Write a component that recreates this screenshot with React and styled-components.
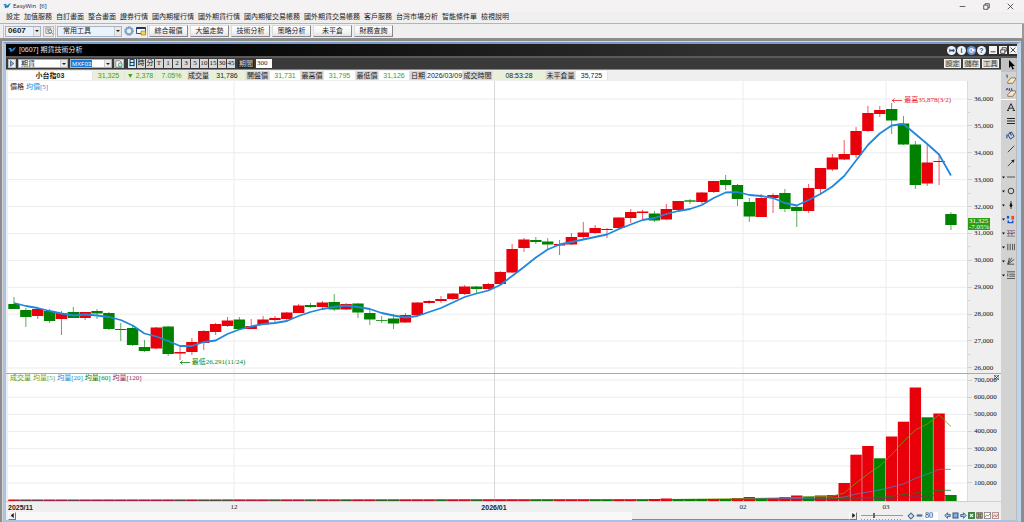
import React from 'react'
import styled, { createGlobalStyle, css } from 'styled-components'

// data
const menus = [
  '設定', '加值服務', '自訂畫面', '整合畫面', '證券行情', '國內期權行情', '國外期貨行情',
  '國內期權交易帳務', '國外期貨交易帳務', '客戶服務', '台灣市場分析', '智能條件單', '檢視說明',
]
const shortcuts = ['綜合報價', '大盤走勢', '技術分析', '策略分析', '未平倉', '財務查詢']
const periods = ['日', '時', '分', 'T', '1', '2', '3', '5', '10', '15', '30', '45']

const quote = [
  { text: '小台指03', w: 85, name: true },
  { text: '31,325', w: 32, tint: true, down: true },
  { text: '▼ 2,378', w: 31, tint: true, down: true },
  { text: '7.05%', w: 32, tint: true, down: true },
  { text: '成交量', w: 21, label: true },
  { text: '31,786', w: 37, tint: true },
  { text: '開盤價', w: 24, label: true },
  { text: '31,731', w: 31, down: true },
  { text: '最高價', w: 23, label: true },
  { text: '31,795', w: 32, down: true },
  { text: '最低價', w: 23, label: true },
  { text: '31,126', w: 31, down: true },
  { text: '日期', w: 17, label: true },
  { text: '2026/03/09', w: 36 },
  { text: '成交時間', w: 30, label: true },
  { text: '08:53:28', w: 53, tint: true },
  { text: '未平倉量', w: 30, label: true },
  { text: '35,725', w: 32 },
]

// [high, body top, body bottom, low, up?] in plot units
const candles = [
  [297, 304, 309, 309, 0], [308, 310, 317, 327, 0], [308, 309, 316, 319, 1], [309, 311, 321, 323, 0],
  [311, 313, 319, 335, 1], [307, 312, 318, 318, 0], [312, 312, 318, 320, 1], [309, 311, 313.5, 319, 0],
  [312, 313, 329, 330, 0], [323, 329, 330, 341, 0], [326, 328, 345, 346, 0], [340, 347, 351, 352, 0],
  [327, 327.5, 348.5, 349, 1], [326, 326.5, 354, 356, 0], [346, 352, 353.5, 360, 1], [338, 342, 352, 355, 1],
  [330, 331, 343, 350, 1], [323, 324, 332, 335, 1], [317, 320.5, 326, 327, 1], [317, 319.5, 329, 330, 0],
  [319, 326, 329, 329, 1], [316, 319.5, 324.5, 325, 1], [316, 318, 320, 322, 1], [312, 312.5, 319, 320, 1],
  [304, 305.5, 313, 313, 1], [303, 305, 307, 308, 0], [301, 302.5, 307, 309, 1], [294, 302, 309.5, 311, 0],
  [303, 304, 309.5, 310, 1], [303, 303.5, 312.5, 318, 0], [310, 313, 319.5, 325, 0], [316, 320, 320.8, 323, 0],
  [314, 318.5, 323.5, 329, 0], [313, 315, 322.5, 323, 1], [302, 302.5, 315, 316, 1], [300, 301, 303, 304, 1],
  [296, 299, 301, 303, 1], [293, 293.5, 299, 300, 1], [285, 286.5, 294, 295, 1], [286, 286.5, 289, 293, 0],
  [283, 284, 289, 291, 1], [271, 272, 284, 285, 1], [244, 249, 272.5, 273, 1], [238, 239.5, 248, 252, 1],
  [237, 240, 242, 244, 0], [238, 241.5, 244.5, 249, 0], [240, 244, 245.5, 255, 1], [233, 237, 244.5, 245, 1],
  [222, 232.5, 237, 239, 1], [225, 228, 233, 234, 1], [228, 229, 230, 238, 1], [217, 217.5, 228, 229, 1],
  [209, 212, 218, 223, 1], [210, 211.5, 213, 220, 1], [211, 213.5, 220.5, 222, 0], [204, 209, 219.5, 220, 1],
  [201, 201, 210, 211, 1], [199, 200.3, 201.7, 204, 0], [192, 192.5, 202, 204, 1], [181, 181, 192, 193, 1],
  [175, 180, 185, 190, 0], [184, 185, 199, 206, 0], [198, 202, 216.5, 222, 0], [194, 198, 217, 217, 1],
  [193, 195, 198, 213, 1], [189, 193, 209, 212, 0], [205, 207, 211, 227, 0], [184, 188, 211, 213, 1],
  [168, 168, 189, 194, 1], [154, 157.5, 169.5, 171, 1], [140, 154, 159.5, 160, 1], [127, 131, 155, 158, 1],
  [106, 113, 131, 132, 1], [106, 110, 114, 117, 1], [103, 109, 120.5, 134, 0], [116, 123.5, 144.5, 145, 0],
  [141, 144.5, 185, 189, 0], [145, 162.5, 183.5, 186, 1], [155, 161, 162, 185, 1], [212, 214, 225, 230, 0],
]

const average = [
  303, 306, 308, 311, 313.5, 315.5, 314.5, 315.5, 317, 320, 325.5, 333.5, 336.5, 341, 346, 346, 342, 340.5, 334, 329.5,
  326.5, 324, 323, 321, 316, 312, 309, 307, 305.5, 307, 309, 313, 315.5, 317.5, 316, 312, 308, 302.5, 297, 293.5,
  290.5, 285, 276, 267, 257.5, 249.5, 244.5, 242, 239.5, 237, 234.5, 229, 224.5, 220, 218, 214, 211, 209, 205, 198,
  192.5, 192, 195, 196, 198, 203, 205.5, 200, 194, 186.5, 176, 160.5, 145, 133.5, 125.5, 124, 134, 144, 154.5, 175.5,
]

// top of each volume bar, first ones are all one flat line
const volumeTops = {
  54: 499, 55: 498.5, 56: 499, 57: 499, 58: 499, 59: 499, 60: 499, 61: 498, 62: 497, 63: 498, 64: 498, 65: 497,
  66: 495.5, 67: 496.5, 68: 495.5, 69: 495, 70: 483, 71: 454.7, 72: 446, 73: 458.3, 74: 436.5, 75: 421.7,
  76: 387.5, 77: 417.3, 78: 413.5, 79: 495,
}
const volumeDown = [1, 2, 5, 14, 16, 17, 18, 22, 25, 28, 31, 32, 36, 39, 44, 45, 49, 50, 53, 56, 57, 58, 60, 63, 67, 73, 77, 79]

const volumeLines = [
  { color: '#7a9a10', pts: [[55, 499.5], [62, 498.5], [66, 497.5], [69, 496], [70, 493], [71, 483], [72, 474], [73, 466], [74, 454.5], [75, 441.5], [76, 430], [77, 424], [78, 415], [79, 426.5]] },
  { color: '#4a7fc8', pts: [[60, 499.5], [69, 498], [70, 497], [71, 494], [72, 492], [73, 490], [74, 487], [75, 484], [76, 478.5], [77, 474], [78, 469.3], [79, 469.3]] },
  { color: '#188018', pts: [[66, 499.5], [68, 499], [71, 498], [74, 496.3], [76, 493], [77, 491.5], [78, 490.3], [79, 490.3]] },
  { color: '#8c2a5c', pts: [[0, 500.6], [70, 499.3], [74, 498.3], [76, 496.5], [78, 495.4], [79, 495.4]] },
]

const prices = [36, 35, 34, 33, 32, 31, 30, 29, 28, 27, 26].map(n => `${n},000`)
const volumes = [7, 6, 5, 4, 3, 2, 1].map(n => `${n}00,000`)
const months = [234, 743, 886]
const cx = i => 14 + i * 11.86

const sans = "'Liberation Sans', 'Noto Sans CJK TC', sans-serif"
const serif = "'Liberation Serif', 'Noto Sans CJK TC', serif"

// styles
const GlobalStyle = createGlobalStyle`
  * { box-sizing: border-box; }
  body { margin: 0; background: #efefef; overflow: hidden; }
  button, input, select { font: inherit; color: inherit; margin: 0; padding: 0; border-radius: 0; }
  svg { display: block; }
`
const App = styled.div`
  display: flex;
  flex-direction: column;
  height: 100vh;
  font: 7px/8px ${sans};
  color: #222;
`
const TitleBar = styled.header`
  display: flex;
  align-items: center;
  height: 12px;
  padding: 0 10px 0 3px;
  gap: 2px;
  background: #f5f2f4;
  font: 6px/10px 'Open Sans', sans-serif;
  white-space: pre;
`
const Spacer = styled.div`
  flex: 1;
`
const CaptionButton = styled.button`
  width: 22px;
  height: 10px;
  display: grid;
  place-items: center end;
  border: 0;
  background: none;
  color: #222;
`
const MenuBar = styled.nav`
  display: flex;
  align-items: center;
  gap: 4px;
  height: 12px;
  padding: 0 6px 1px;
  border-bottom: 1px solid #b4b4b4;
  background: #efefef;
`
const MenuLink = styled.a`
  color: #222;
  text-decoration: none;
  white-space: nowrap;
`
const ToolBar = styled.div`
  display: flex;
  align-items: center;
  height: 15px;
  padding-left: 3px;
  border-right: 2px solid #999;
  border-bottom: 1px solid #909090;
`
const ToolGroup = styled.div`
  display: flex;
  align-items: center;
  gap: 2px;
  height: 13px;
  padding: 0 1px;
  border-left: 1px solid #c4c4c4;
`
const Select = styled.select`
  appearance: none;
  width: ${p => p.$w}px;
  height: ${p => (p.$small ? 9 : 11)}px;
  padding-left: ${p => p.$pad || 2}px;
  border: 1px solid #a8b4c4;
  background: ${p => (p.$small ? '#fff' : '#eaf3fc')};
  font-weight: ${p => (p.$bold ? 700 : 400)};
  font-size: ${p => (p.$bold ? 8 : 7)}px;
  line-height: 8px;
  grid-area: 1 / 1;
`
const Combo = styled.div`
  display: grid;
  align-items: center;
`
const Arrow = styled.span`
  grid-area: 1 / 1;
  justify-self: end;
  width: 7px;
  height: ${p => (p.$small ? 7 : 9)}px;
  margin-right: 1px;
  display: grid;
  place-items: center;
  background: #e8e8e8;
  border-left: 1px solid #ccc;
  pointer-events: none;
  &::after {
    content: '';
    border: 2px solid transparent;
    border-top-color: #222;
    border-bottom: 0;
  }
`
const IconButton = styled.button`
  width: ${p => p.$w || 11}px;
  height: ${p => p.$h || 11}px;
  display: grid;
  place-items: center;
  border: ${p => (p.$flat ? 0 : '1px solid #bbb')};
  background: ${p => (p.$flat ? 'none' : '#eee')};
`
const Shortcut = styled.button`
  width: 39px;
  height: 12px;
  border: 1px solid #dcdcdc;
  border-right-color: #888;
  border-bottom-color: #888;
  background: linear-gradient(#fff, #f4f4f6 60%, #e0e2ea);
  line-height: 8px;
`
const Desktop = styled.main`
  flex: 1;
  min-height: 0;
  display: flex;
  border: solid #8c8c8c;
  border-width: 2px 3px 0 2px;
  background: #d4d4d4;
  padding: 1px 0 0 1px;
`
const Frame = styled.section`
  flex: 1;
  min-width: 0;
  display: flex;
  flex-direction: column;
  border: solid #a9c4e2;
  border-width: 2px 4px 2px 3px;
  border-top-color: #7d9cc4;
  border-right-color: #bdd6ee;
`
const FrameTitle = styled.div`
  display: flex;
  align-items: center;
  height: 14px;
  padding: 0 1px 0 2px;
  gap: 3px;
  background: linear-gradient(90deg, #000 15%, #303030 70%);
  border-bottom: 2px solid #5a5a5a;
  color: #e4e4e4;
`
const Round = styled.button`
  width: 9px;
  height: 9px;
  padding: 0;
  margin-left: -2px;
  border: 0;
  border-radius: 50%;
  background: ${p => (p.$blue ? '#6c98dc' : '#eef4fc')};
  color: ${p => (p.$blue ? '#fff' : '#334a70')};
  font: 700 7px/9px ${sans};
`
const WinButton = styled.button`
  width: 8px;
  height: 8px;
  margin-right: -1px;
  display: grid;
  place-items: center;
  border: 0;
  background: #f4f4f4;
  color: #333;
`
const FrameBody = styled.div`
  flex: 1;
  min-height: 0;
  display: flex;
`
const Panel = styled.div`
  flex: 1;
  min-width: 0;
  display: flex;
  flex-direction: column;
  background: #efefef;
`
const Controls = styled.div`
  display: flex;
  align-items: center;
  height: 12px;
  padding: 0 2px;
  gap: 2px;
  background: #3a3a3a;
  border-bottom: 1px solid #888;
`
const SymbolInput = styled.input`
  width: 42px;
  height: 9px;
  padding-left: 1px;
  border: 1px solid #a8b4c4;
  background: linear-gradient(90deg, #1a7ad8 21px, #fff 21px);
  color: #fff;
  font-size: 6px;
  grid-area: 1 / 1;
`
const Periods = styled.div`
  display: flex;
  gap: 1px;
  margin: 0 1px 0 2px;
`
const Period = styled.button`
  width: 8px;
  height: 9px;
  border: 0;
  background: ${p => (p.$on ? '#d4eef0' : '#d8d8d8')};
  font: ${p => (p.$on ? 700 : 400)} 7px/9px ${serif};
  color: #111;
`
const PeriodLabel = styled.label`
  padding: 0 1px;
  background: #222;
  color: #ddd;
`
const PeriodInput = styled.input`
  width: 16px;
  height: 9px;
  padding-left: 1px;
  border: 0;
  background: #fff;
  font: 7px/9px ${serif};
`
const SmallButton = styled.button`
  width: 17px;
  height: 9px;
  border: 1px solid #f0f0f0;
  background: #d0d0c8;
  color: #444;
  line-height: 7px;
`
const Quote = styled.div`
  display: flex;
  align-items: center;
  height: 11px;
  padding-left: 2px;
`
const Cell = styled.div`
  flex: none;
  width: ${p => p.$w}px;
  height: 9px;
  border-right: 1px solid #e4e4e4;
  background: #fff;
  text-align: center;
  line-height: 9px;
  white-space: nowrap;
  ${p => p.$label && css`background: #d8d8d8;`}
  ${p => p.$tint && css`background: #e8f1d8;`}
  ${p => p.$down && css`color: #3aa01c;`}
  ${p => p.$name && css`font-weight: 700;`}
`
const ChartRow = styled.div`
  flex: ${p => p.$grow} 1 0;
  min-height: 0;
  display: flex;
  padding-left: 2px;
  border-top: ${p => (p.$divided ? '1px solid #aaa' : 0)};
`
const Plot = styled.div`
  position: relative;
  flex: 1;
  min-width: 0;
  background: #fff;
  svg { width: 100%; height: 100%; }
`
const Legend = styled.div`
  position: absolute;
  top: ${p => p.$top}px;
  left: 2px;
  display: flex;
  gap: 2px;
  font-family: ${serif};
  white-space: nowrap;
`
const Tone = styled.span`
  color: ${p => p.$c};
`
const Note = styled.div`
  position: absolute;
  left: ${p => p.$x}%;
  top: ${p => p.$y}%;
  display: flex;
  align-items: center;
  gap: 2px;
  color: ${p => p.$c};
  font-family: ${serif};
  white-space: nowrap;
  svg { width: 10px; height: 5px; }
`
const Axis = styled.div`
  position: relative;
  width: 34px;
  display: flex;
  flex-direction: column;
  justify-content: space-between;
  padding: ${p => p.$pad};
  border-left: 1px solid #dcdcdc;
  color: #111;
  font-family: ${serif};
`
const Tick = styled.div`
  display: flex;
  align-items: center;
  gap: 2px;
  height: 8px;
  &::before {
    content: '';
    width: ${p => (p.$minor ? 2 : 4)}px;
    height: 1px;
    background: #d0d0d0;
  }
`
const LastPrice = styled.div`
  position: absolute;
  left: 0;
  top: 47%;
  padding: 0 1px;
  background: #2c9c10;
  color: #fff;
  line-height: 6px;
`
const ClosePane = styled.button`
  position: absolute;
  right: 2px;
  top: 1px;
  width: 5px;
  height: 5px;
  border: 0;
  background: none;
`
const TimeAxis = styled.div`
  display: grid;
  grid-template-columns: 96fr 260fr 260fr 238fr 48fr 57fr;
  height: 10px;
  padding: 1px 34px 0 2px;
  border-top: 1px solid #d0d0d0;
  font: 7px/9px ${serif};
  text-align: center;
`
const Month = styled.span`
  text-align: ${p => (p.$first ? 'left' : 'center')};
  ${p => p.$year && css`font: 700 7px/9px ${sans};`}
`
const ScrollRow = styled.div`
  display: flex;
  align-items: center;
  height: 9px;
  padding-left: 2px;
`
const ScrollButton = styled.button`
  width: 8px;
  height: 8px;
  display: grid;
  place-items: center;
  border: 1px solid #fff;
  border-right-color: #777;
  border-bottom-color: #777;
  background: #eee;
`
const Track = styled.div`
  flex: 1;
  height: 8px;
  display: flex;
  justify-content: flex-end;
  background: #f8f8f8;
`
const Thumb = styled.div`
  width: 26%;
  border-bottom: 1px solid #888;
  background: #efefef;
`
const Range = styled.input`
  appearance: none;
  width: 42px;
  height: 8px;
  margin: 0 3px 0 4px;
  background:
    linear-gradient(#999, #999) 0 3px / 100% 1px no-repeat,
    repeating-linear-gradient(90deg, #999 0 1px, transparent 1px 3px) 0 7px / 100% 1px no-repeat;
  &::-webkit-slider-thumb {
    appearance: none;
    width: 2px;
    height: 5px;
    background: #666;
  }
`
const CountInput = styled.input`
  width: 14px;
  height: 8px;
  padding-left: 1px;
  border: 0;
  background: #fff;
  font: 8px/8px ${serif};
`
const Tools = styled.div`
  display: flex;
  margin: 0 2px 0 5px;
`
const SideBar = styled.aside`
  width: 16px;
  display: flex;
  flex-direction: column;
  background: #d2d2d2;
  border-right: 1px solid #bbb;
`
const SideButton = styled.button`
  height: 14px;
  display: grid;
  grid-template-columns: 4px 11px;
  place-items: center;
  border: 0;
  background: ${p => (p.$on ? '#c2c2c2' : 'none')};
  border-bottom: ${p => (p.$rule ? '1px solid #fff' : 0)};
`

// icons
const Ico = ({ s = 8, children, ...rest }) => (
  <svg width={s} height={s} viewBox="0 0 10 10" fill="none" stroke="currentColor" {...rest}>{children}</svg>
)
const Logo = () => (
  <svg width="8" height="6" viewBox="0 0 18 12">
    <path d="M0 2 L7 1 L9 6 L13 1 L18 0 L12 8 L9 9 L6 11 L4 5 Z" fill="#2a8fd0" />
    <path d="M2 5 L6 11 L8 8 Z M11 3 L13 8 L9 10 Z" fill="#145f9c" />
  </svg>
)
const PageSearch = () => (
  <Ico><path d="M1 1h6v7H1z M2.500 3h3 M2.500 5h2" stroke="#888" /><circle cx="6.500" cy="5.500" r="2" stroke="#555" fill="#dff" /><path d="M8 7l2 2" stroke="#555" /></Ico>
)
const PageAdd = () => (
  <Ico><path d="M1 1h5l2 2v6H1z" fill="#fff" stroke="#666" /><circle cx="6.500" cy="6" r="2.500" fill="#c8e8d8" stroke="#397" /></Ico>
)
const Eraser = ({ tag }) => (
  <Ico s={11}>
    <path d="M2.500 7l3-3.500H9.500v1.500L7 8.500H2.500z" fill="#f6e6c4" stroke="#84704a" strokeWidth=".8" />
    <path d={tag ? 'M1 3L2 1L3 3M4 1v2h1M6 1v2h1' : 'M1 1h1v2.500'} stroke="#3344bb" strokeWidth=".9" />
  </Ico>
)
const sideTools = [
  { name: '選取', on: true, art: <Ico s={10}><path d="M3 0v8l2-2 1.500 3.500L8 9 6.500 6H9z" fill="#000" stroke="none" /></Ico> },
  { name: '清除', art: <Eraser /> },
  { name: '全部清除', rule: true, art: <Eraser tag /> },
  { name: '文字', art: <Ico><path d="M.8 9.500L5 .8l4.200 8.700M2.500 6.500h5M0 9.500h2.500M7 9.500h3" stroke="#222" strokeWidth="1.200" /></Ico> },
  { name: '線寬', art: <Ico><path d="M0 2h10M0 5h10M0 8h10" stroke="#222" strokeWidth="1.300" /></Ico> },
  { name: '填色', art: <Ico s={9}><path d="M2 4l4-3 3 5-4 3z" fill="#b8d4f4" stroke="#334" /><path d="M1 4v4M4 1l2 4" stroke="#25a" strokeWidth="1.300" /></Ico> },
  { name: '直線', art: <Ico><path d="M1 9l8-8" stroke="#222" /></Ico> },
  { name: '箭頭', art: <Ico><path d="M1 9l8-8" stroke="#222" /><path d="M9.500 .5L5 2l3 3z" fill="#222" stroke="none" /></Ico> },
  { name: '水平線', more: true, art: <Ico><path d="M0 5h10" stroke="#333" /></Ico> },
  { name: '圓形', more: true, art: <Ico><circle cx="5" cy="5" r="3.500" stroke="#333" strokeWidth="1.200" /></Ico> },
  { name: '標記', more: true, art: <Ico><path d="M5 0v10" stroke="#222" /><path d="M5 2l2 3.500-2 2.500-2-2.500z" fill="#111" stroke="none" /></Ico> },
  { name: '漲跌', more: true, art: <Ico s={9}><path d="M1 1h2.500v3H1z" fill="#1558c8" stroke="none" /><path d="M6 1h3v4H6z" fill="#e84a1c" stroke="none" /><path d="M2.500 6v2.500h5V6" stroke="#1558c8" strokeWidth="1.600" /></Ico> },
  { name: '通道', more: true, art: <Ico><path d="M0 2h10M0 9h10M2 2v7M6 2v7" stroke="#777" /><path d="M0 6l3-1 3 1 4-1.500" stroke="#c030b0" strokeWidth="1.300" /></Ico> },
  { name: '週期線', more: true, art: <Ico><path d="M1 1v8M4 1v8M7 1v8M9.500 1v8" stroke="#333" /></Ico> },
  { name: '扇形線', more: true, art: <Ico><path d="M1 9L3 1M1 9l5-8M1 9l8-6M1 9h8" stroke="#333" /></Ico> },
  { name: '黃金分割', more: true, art: <Ico><path d="M0 1h10M3 4h7M3 6.500h7M0 9.500h10M1 3v4" stroke="#333" /></Ico> },
]
const bottomTools = [
  ['左移', <path d="M1 5l4-4v2.500h4v3H5V9z" fill="#9cc0e8" stroke="#246" />],
  ['停止', <path d="M1.500 1.500h7v7h-7z" fill="#7fb0ec" stroke="#357" strokeWidth="1.500" />],
  ['右移', <path d="M9 5L5 1v2.500H1v3h4V9z" fill="#9cc0e8" stroke="#246" />],
  ['試算表', <><path d="M.5 .5h9v9h-9z" fill="#2f9a3a" stroke="#165c1c" /><path d="M3 3l4 4M7 3L3 7" stroke="#fff" strokeWidth="1.500" /></>],
  ['儲存', <><path d="M.5 1h9v8h-9z" fill="#c8b870" stroke="#555" /><path d="M3 1v3h4V1M3 9V6h4v3" stroke="#333" /></>],
  ['線圖', <><path d="M.5 .5h9v9h-9z" fill="#fff" stroke="#555" /><path d="M1 8l3-4 2 2 3-4" stroke="#c33" /></>],
  ['量圖', <><path d="M.5 .5h9v9h-9z" fill="#f4e4e0" stroke="#866" /><path d="M1 7l3-3 2 3 3-4" stroke="#c33" /></>],
]

const path = pts => pts.map(([i, y]) => `${cx(i)},${y}`).join(' ')

const Grid = ({ levels, top, bottom }) => (
  <g stroke="#ececec">
    {levels.map(y => <path key={y} d={`M8 ${y}H967`} />)}
    {months.map(x => <path key={x} d={`M${x} ${top}V${bottom}`} />)}
    <path d={`M494.500 ${top}V${bottom}`} stroke="#d8d8d8" />
  </g>
)

const PriceChart = () => (
  <svg viewBox="8 81 959 292" preserveAspectRatio="none">
    <Grid levels={prices.map((_, i) => 99 + i * 26.9)} top={81} bottom={373} />
    {candles.map(([hi, top, bottom, lo, up], i) => (
      <g key={i} fill={up ? '#e8000b' : '#008200'}>
        <rect x={cx(i) - 0.5} y={hi} width="1" height={lo - hi} opacity=".65" />
        <rect x={cx(i) - 5.7} y={top} width="11.400" height={bottom - top} />
      </g>
    ))}
    <polyline points={path(average.map((y, i) => [i, y]))} fill="none" stroke="#2088dc" strokeWidth="1.800" strokeLinejoin="round" />
  </svg>
)

const VolumeChart = () => (
  <svg viewBox="8 374 959 127" preserveAspectRatio="none">
    <Grid levels={volumes.map((_, i) => 380 + i * 17.17)} top={374} bottom={501} />
    {candles.map((_, i) => {
      const y = volumeTops[i] || 499.5
      return <rect key={i} x={cx(i) - 5.7} y={y} width="11.400" height={501 - y} fill={volumeDown.includes(i) ? '#008200' : '#e8000b'} />
    })}
    {volumeLines.map(l => (
      <polyline key={l.color} points={path(l.pts)} fill="none" stroke={l.color} strokeWidth=".8" />
    ))}
  </svg>
)

const ArrowLeft = () => (
  <svg viewBox="0 0 10 5" fill="none" stroke="currentColor"><path d="M10 2.500H0M2.500 .5L.5 2.500l2 2" strokeWidth=".8" /></svg>
)

const EasyWin = () => (
  <App>
    <GlobalStyle />
    <TitleBar>
      <Logo />
      <span>EasyWin  [6]</span>
      <Spacer />
      <CaptionButton aria-label="最小化"><Ico s={7}><path d="M1 5h8" /></Ico></CaptionButton>
      <CaptionButton aria-label="還原"><Ico s={7}><path d="M1 3h6v6H1zM3 3V1h6v6H7" /></Ico></CaptionButton>
      <CaptionButton aria-label="關閉"><Ico s={7}><path d="M1 1l8 8M9 1L1 9" /></Ico></CaptionButton>
    </TitleBar>
    <MenuBar>
      {menus.map(m => <MenuLink key={m} href="#">{m}</MenuLink>)}
    </MenuBar>
    <ToolBar>
      <ToolGroup>
        <Combo>
          <Select aria-label="代號" $w={36} $bold defaultValue="0607"><option>0607</option></Select>
          <Arrow />
        </Combo>
        <IconButton aria-label="查詢"><PageSearch /></IconButton>
      </ToolGroup>
      <ToolGroup>
        <Combo>
          <Select aria-label="工具" $w={65} $pad={5} defaultValue="常用工具"><option>常用工具</option></Select>
          <Arrow />
        </Combo>
        <IconButton aria-label="選項" $flat $w={10}>
          <Ico s={10}><circle cx="5" cy="5" r="3.200" stroke="#7fa8d8" strokeWidth="2" /><circle cx="5" cy="5" r="4.400" stroke="#6a90b8" strokeDasharray="1.200 1.200" /></Ico>
        </IconButton>
        <IconButton aria-label="視窗" $flat $w={10}>
          <Ico s={10}><path d="M.5 1.500h9v6h-9z" fill="#fff" stroke="#357" /><path d="M.5 2h9" stroke="#236" strokeWidth="2" /><path d="M5 5h4.500v4H5z" fill="#f4d460" stroke="#a80" strokeWidth=".7" /></Ico>
        </IconButton>
      </ToolGroup>
      <ToolGroup>
        {shortcuts.map(s => <Shortcut key={s}>{s}</Shortcut>)}
      </ToolGroup>
    </ToolBar>

    <Desktop>
      <Frame>
        <FrameTitle>
          <Logo />
          <span>[0607] 期貨技術分析</span>
          <Spacer />
          <Round aria-label="離開">↦</Round>
          <Round>i</Round>
          <Round $blue aria-label="同步">⟳</Round>
          <Round>?</Round>
          <WinButton aria-label="縮小"><Ico s={6}><path d="M1 8h8" strokeWidth="1.500" /></Ico></WinButton>
          <WinButton aria-label="還原視窗"><Ico s={7}><path d="M1 4h6v5H1zM3 4V1h6v5H7" strokeWidth="1.200" /></Ico></WinButton>
          <WinButton aria-label="關閉視窗"><Ico s={6}><path d="M1 1l8 8M9 1L1 9" strokeWidth="1.500" /></Ico></WinButton>
        </FrameTitle>
        <FrameBody>
          <Panel>
            <Controls>
              <IconButton $w={8} $h={9} aria-label="展開"><Ico s={7}><path d="M2 1v8l5-4z" fill="#8ac" stroke="#357" /></Ico></IconButton>
              <Combo>
                <Select aria-label="商品類別" $w={50} $small defaultValue="期貨"><option>期貨</option></Select>
                <Arrow $small />
              </Combo>
              <Combo>
                <SymbolInput aria-label="商品代號" defaultValue="MXF03" />
                <Arrow $small />
              </Combo>
              <IconButton $w={10} $h={9} aria-label="新增商品"><PageAdd /></IconButton>
              <Periods>
                {periods.map((p, i) => <Period key={p} $on={i === 0}>{p}</Period>)}
              </Periods>
              <PeriodLabel htmlFor="span">期間</PeriodLabel>
              <PeriodInput id="span" defaultValue="300" />
              <Spacer />
              <SmallButton>設定</SmallButton>
              <SmallButton>儲存</SmallButton>
              <SmallButton>工具</SmallButton>
            </Controls>
            <Quote>
              {quote.map(q => (
                <Cell key={q.text} $w={q.w} $label={q.label} $tint={q.tint} $down={q.down} $name={q.name}>{q.text}</Cell>
              ))}
            </Quote>

            <ChartRow $grow={292}>
              <Plot>
                <PriceChart />
                <Legend $top={2}><span>價格</span><Tone $c="#2088dc">均價[5]</Tone></Legend>
                <Note $x={92.2} $y={5.2} $c="#e8202c"><ArrowLeft />最高35,878(3/2)</Note>
                <Note $x={17.9} $y={95} $c="#088208"><ArrowLeft />最低26,291(11/24)</Note>
              </Plot>
              <Axis $pad="14px 0 1px">
                {prices.map((p, i) => (
                  <React.Fragment key={p}>
                    {i > 0 && <Tick $minor />}
                    <Tick>{p}</Tick>
                  </React.Fragment>
                ))}
                <LastPrice>31,325<br />-7.05%</LastPrice>
              </Axis>
            </ChartRow>
            <ChartRow $grow={127} $divided>
              <Plot>
                <VolumeChart />
                <Legend $top={0}>
                  <Tone $c="#5a9a10">成交量</Tone>
                  <Tone $c="#7aa818">均量[5]</Tone>
                  <Tone $c="#2088dc">均量[20]</Tone>
                  <Tone $c="#088208">均量[60]</Tone>
                  <Tone $c="#8c2a5c">均量[120]</Tone>
                </Legend>
              </Plot>
              <Axis $pad="2px 0 14px">
                {volumes.map(v => <Tick key={v}>{v}</Tick>)}
                <ClosePane aria-label="關閉副圖"><Ico s={5}><path d="M0 0h10v10H0zM1 1l8 8M9 1L1 9" stroke="#333" strokeWidth="1.500" /></Ico></ClosePane>
              </Axis>
            </ChartRow>
            <TimeAxis>
              <Month $year $first>2025/11</Month>
              <Month>12</Month>
              <Month $year>2026/01</Month>
              <Month>02</Month>
              <Month>03</Month>
            </TimeAxis>
            <ScrollRow>
              <ScrollButton aria-label="向左捲動"><Ico s={5}><path d="M7 1v8L2 5z" fill="#111" /></Ico></ScrollButton>
              <Track><Thumb /></Track>
              <ScrollButton aria-label="向右捲動"><Ico s={5}><path d="M3 1v8l5-4z" fill="#111" /></Ico></ScrollButton>
              <Range type="range" aria-label="縮放" defaultValue="30" />
              <IconButton $flat $w={9} $h={8} aria-label="放大"><Ico><path d="M5 1l4 4-4 4-4-4z" fill="#89a8cc" stroke="#246" /><path d="M3 5h4M5 3v4" stroke="#fff" /></Ico></IconButton>
              <IconButton $flat $w={9} $h={8} aria-label="縮小圖"><Ico s={7}><path d="M1 5h8" stroke="#4a6c9c" strokeWidth="3" /></Ico></IconButton>
              <CountInput aria-label="顯示筆數" defaultValue="80" />
              <Tools>
                {bottomTools.map(([name, art]) => <IconButton key={name} $flat $w={8} $h={8} aria-label={name}><Ico s={7}>{art}</Ico></IconButton>)}
              </Tools>
            </ScrollRow>
          </Panel>
          <SideBar>
            {sideTools.map(t => (
              <SideButton key={t.name} aria-label={t.name} $on={t.on} $rule={t.rule}>
                <span>{t.more && <Ico s={3}><path d="M0 2h10L5 8z" fill="#111" stroke="none" /></Ico>}</span>
                {t.art}
              </SideButton>
            ))}
          </SideBar>
        </FrameBody>
      </Frame>
    </Desktop>
  </App>
)

export default EasyWin
